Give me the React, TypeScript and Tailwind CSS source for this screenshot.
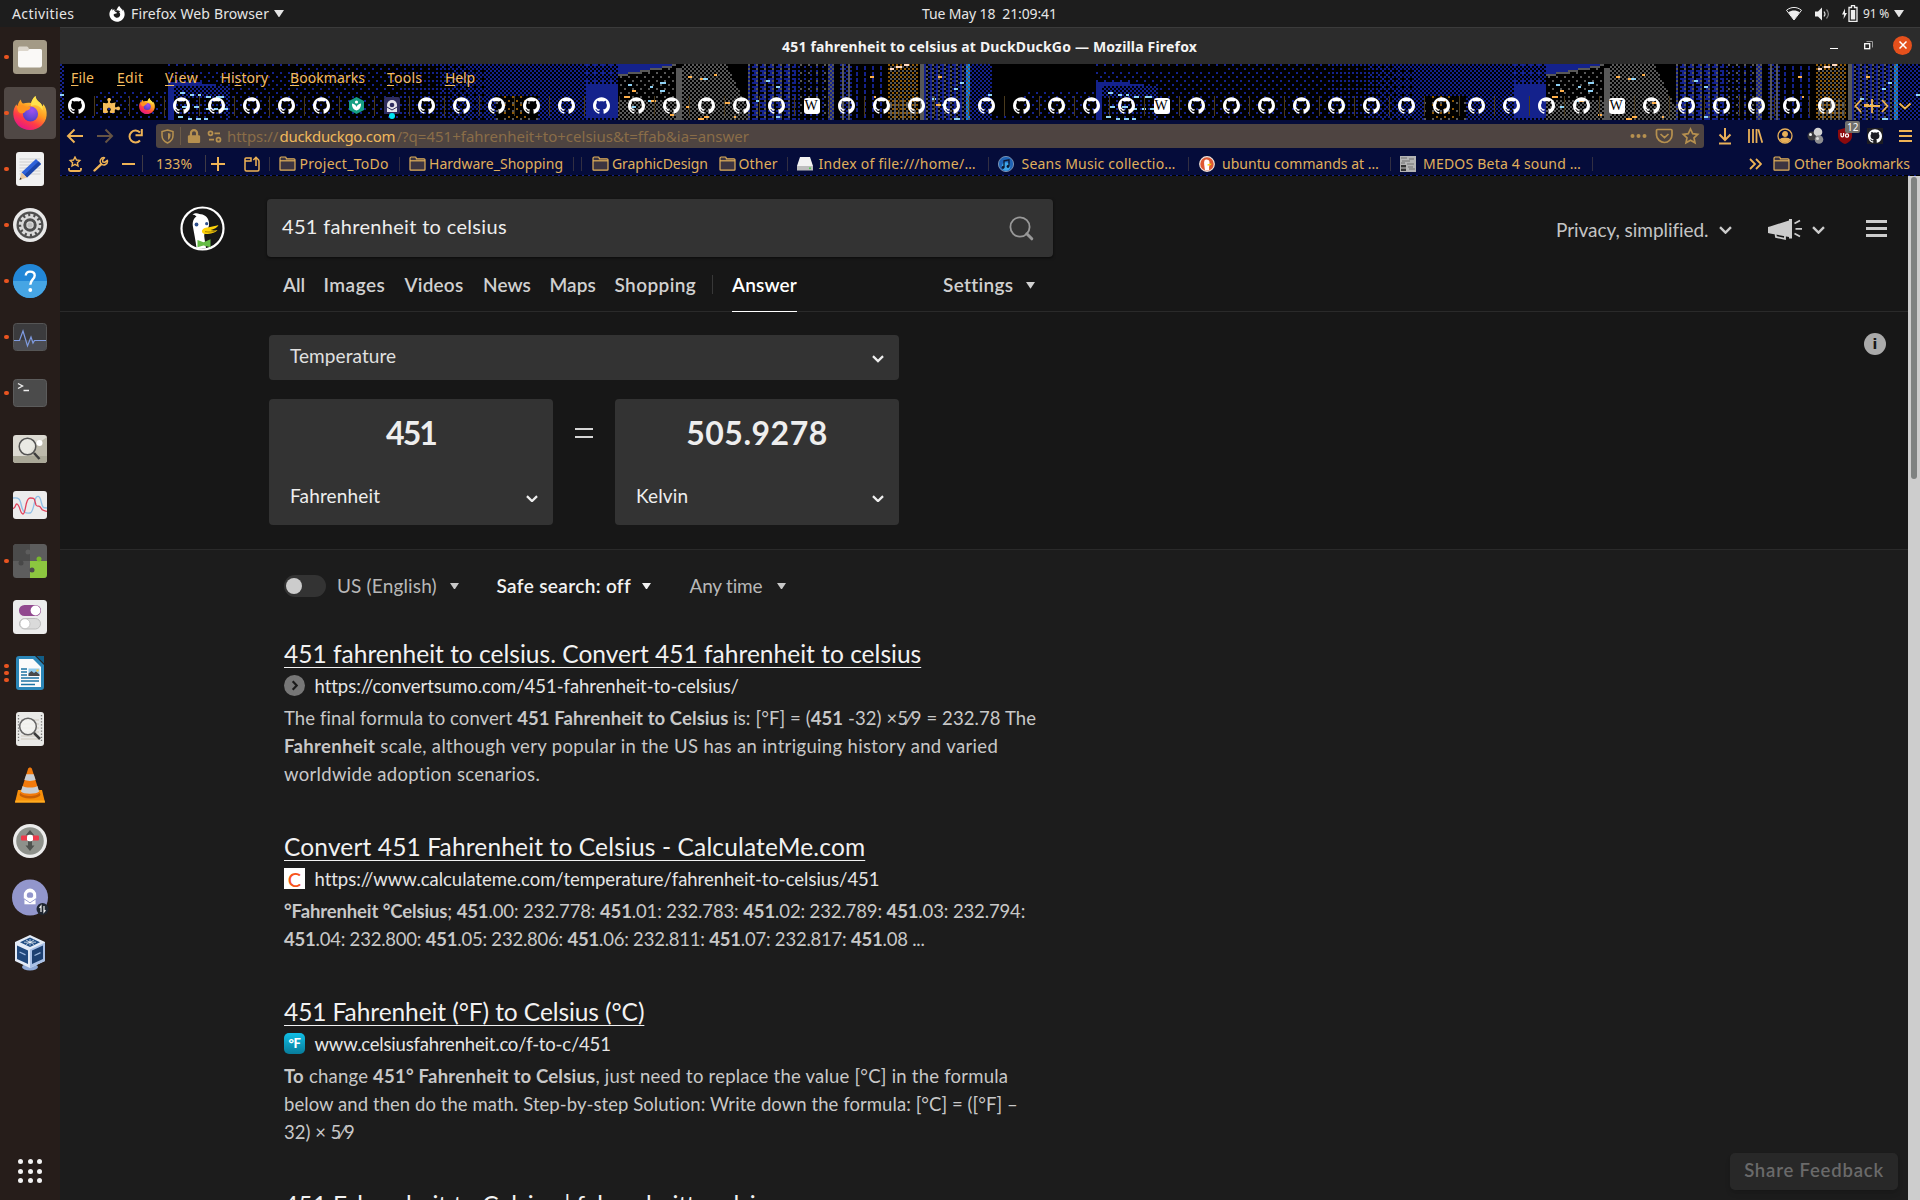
import type { ReactNode } from "react";
import { FaFirefoxBrowser, FaPuzzlePiece, FaLock, FaWrench } from "react-icons/fa";
import { SiGithub } from "react-icons/si";

/* ---------- pixel-art skyline behind the tab strip ---------- */

const BAYER = [
  [0, 8, 2, 10],
  [12, 4, 14, 6],
  [3, 11, 1, 9],
  [15, 7, 13, 5],
];

const PALETTE = {
  blue: "#14228c",
  gray: "#585858",
  brown: "#8f5a08",
  azure: "#0a84f0",
  sky: "#8fd2f5",
  amber: "#ffb04a",
  peach: "#ffd9c0",
};
type Ink = keyof typeof PALETTE;

function skyDensity(x: number, y: number) {
  if (x < 96) return y > 48 ? 0.12 : 0;
  if (x < 165) return y > 26 ? 0.1 : 0;
  if (x < 300) return y > 6 ? 0.1 : 0.06;
  if (x < 400) return 0.13;
  if (x < 440) return 0.2;
  if (x < 490) return 0.3 + (x - 440) / 250;
  if (x < 585) return 0.5;
  return y > 18 ? 0.97 - (y > 50 ? 0.2 : 0) : 0.56;
}

function inkAt(x: number, y: number): Ink | null {
  const cx = x >> 1;
  const cy = y >> 1;
  const t = (BAYER[cy % 4][cx % 4] + 0.5) / 16;
  const checker = (cx + cy) % 2 === 0;
  if (x >= 168 && x < 229 && y >= 18 + (x > 200 ? (x - 200) / 7 : 0)) {
    if (x < 174 || y < 22) return "blue";
    return y < 32 || x > 224 ? (checker ? "blue" : null) : t < 0.2 ? "blue" : null;
  }
  if (x >= 496 && x < 538 && y >= 32) {
    if (x > 500 && x < 526 && t < 0.15) return "brown";
    return t > 0.94 ? "gray" : null;
  }
  if (x < 618) return t < skyDensity(x, y) ? "blue" : null;
  if (x < 676) {
    const roof = 10 - (x - 622) / 5.5;
    if (y < roof - 1) return "blue";
    if (y < roof + 1) return "gray";
    if (y > 34) return t < 0.5 ? "gray" : null;
    return t < 0.14 ? "gray" : null;
  }
  if (x < 681) return y > 3 ? "gray" : null;
  if (x < 748) return x < 726 + y * 0.5 ? (checker ? "gray" : null) : null;
  if (x < 795) {
    const k = cx % 4;
    if (k === 0) return cy % 2 ? "blue" : null;
    if (k === 2) return checker ? "gray" : "blue";
    return k === 1 && t < 0.6 ? "blue" : null;
  }
  if (x < 828) return cx % 3 === 0 && cy % 2 ? (t < 0.2 ? "gray" : "blue") : t < 0.06 ? "gray" : null;
  if (x < 834) return checker ? "gray" : "blue";
  if (x < 840) return null;
  if (x < 851) return cx % 3 === 1 ? "gray" : checker ? "blue" : null;
  if (x < 888) return cx % 4 === 0 && cy % 3 !== 0 ? "blue" : null;
  if (x < 918) return checker ? (t < 0.28 ? "brown" : "gray") : y > 34 && t < 0.7 ? "gray" : null;
  if (x < 920) return null;
  if (x < 924) return "gray";
  if (x < 966) {
    const k = cx % 3;
    return k === 0 ? "blue" : k === 1 ? (checker ? "gray" : null) : checker ? "blue" : null;
  }
  if (x < 970) return checker ? "azure" : "gray";
  return checker ? "blue" : null;
}

const SPARKS: [Ink, number, number, number][] = [
  ["sky", 180, 28, 5], ["sky", 190, 30, 4], ["sky", 198, 30, 3], ["sky", 206, 32, 5], ["sky", 216, 32, 8],
  ["sky", 182, 42, 5], ["sky", 194, 42, 6], ["sky", 206, 44, 3], ["sky", 214, 44, 4], ["sky", 222, 44, 6],
  ["sky", 178, 52, 5], ["sky", 188, 54, 4], ["sky", 196, 54, 5], ["sky", 204, 54, 4],
  ["sky", 628, 20, 4], ["sky", 660, 18, 6], ["sky", 650, 22, 3], ["amber", 632, 26, 4], ["sky", 660, 26, 5],
  ["amber", 624, 32, 6], ["sky", 648, 36, 3], ["amber", 651, 36, 5], ["sky", 632, 42, 4], ["amber", 670, 50, 4],
  ["amber", 688, 12, 4], ["amber", 700, 14, 3], ["sky", 703, 14, 5], ["amber", 714, 10, 3], ["amber", 724, 38, 6],
  ["amber", 686, 42, 4], ["amber", 704, 52, 5], ["amber", 698, 54, 6], ["amber", 734, 52, 2],
  ["sky", 766, 16, 4], ["sky", 776, 22, 4], ["sky", 756, 36, 4], ["sky", 776, 52, 4],
  ["amber", 870, 12, 4], ["amber", 874, 32, 2], ["peach", 890, 4, 4], ["peach", 896, 2, 6], ["peach", 904, 0, 5],
  ["amber", 938, 12, 4], ["sky", 932, 34, 4], ["sky", 960, 18, 4], ["sky", 954, 24, 4], ["amber", 936, 40, 5],
  ["sky", 942, 40, 3], ["sky", 954, 54, 6], ["sky", 988, 30, 4],
];

const SKYLINE: Record<Ink, string> = (() => {
  const out = { blue: "", gray: "", brown: "", azure: "", sky: "", amber: "", peach: "" };
  for (let y = 0; y < 56; y += 2)
    for (let x = 64; x < 992; x += 2) {
      const ink = inkAt(x, y);
      if (ink) out[ink] += `M${x} ${y}h2v2h-2z`;
    }
  for (const [ink, x, y, w] of SPARKS) out[ink] += `M${x} ${y}h${w}v2h-${w}z`;
  return out;
})();

function Skyline() {
  return (
    <svg className="absolute inset-0 h-[56px] w-[1860px]" viewBox="60 0 1860 56" shapeRendering="crispEdges">
      <defs>
        <g id="city">
          {(Object.keys(PALETTE) as Ink[]).map((k) => (
            <path key={k} d={SKYLINE[k]} fill={PALETTE[k]} />
          ))}
        </g>
      </defs>
      <use href="#city" x="-928" />
      <use href="#city" />
      <use href="#city" x="928" />
    </svg>
  );
}

/* ---------- shared icons ---------- */

function Firefox({ size }: { size: number }) {
  return (
    <svg width={size} height={size} viewBox="0 0 34 34">
      <defs>
        <linearGradient id="ffBody" x1="0.8" y1="0.1" x2="0.3" y2="1">
          <stop offset="0" stopColor="#ffe14a" />
          <stop offset="0.4" stopColor="#ff9a1f" />
          <stop offset="0.7" stopColor="#ff3b47" />
          <stop offset="1" stopColor="#e3158a" />
        </linearGradient>
        <radialGradient id="ffGlobe" cx="0.6" cy="0.25" r="0.8">
          <stop offset="0" stopColor="#a050f0" />
          <stop offset="0.6" stopColor="#6a48d8" />
          <stop offset="1" stopColor="#4a3cc0" />
        </radialGradient>
      </defs>
      <path
        d="M22.500 0c.2 3 1.800 4.600 4.500 6.800 1.200 1 1.800 2.300 2.300 3.400.8-.6 1-1.400 1-2.200 2.700 3 3.700 7 3.300 11.500C32.800 27.500 26 34 17 34 8 34 .8 27.500.3 18.500.1 14.500 1.200 11 3.500 8.200c.2 1 .5 1.500 1 2C5 7.500 6.200 5 8 3.500c0 1.800.6 3 2 4C13 6.500 16 6.400 18 7c1-3 2.500-5.500 4.500-7z"
        fill="url(#ffBody)"
      />
      <circle cx="17.500" cy="18" r="7.600" fill="url(#ffGlobe)" />
      <path d="M4 10c3.500-1.500 6.500-1.200 9 .8 1.500 0 4-.2 4.500.6-.2 1.600-1.800 2.600-4.500 3.300-1 2-3.500 3-5.500 2.500C5 16.500 4 13 4 10z" fill="#ff9320" />
      <path d="M22.500 0c.2 3 1.800 4.600 4.500 6.800 2.500 2.400 3 5 2.500 7.500-1.500-3.300-5-5-7.500-5-1.500 0-3 .2-4 .6C18 6 19.500 2.500 22.500 0z" fill="#ffe24d" />
    </svg>
  );
}

function Folder() {
  return (
    <svg className="h-[15px] w-[17px] shrink-0" viewBox="0 0 17 15" fill="none" stroke="#e3b15a" strokeWidth="1.200">
      <path d="M1 13.500V2.300C1 1.500 1.400 1 2.200 1h4c.6 0 .9.300 1 .9l.2.9h7.600c.6 0 1 .4 1 1v9.700c0 .4-.3.600-.7.600H1.700c-.4 0-.7-.200-.7-.600z" fill="#4a3f42" fillOpacity="0.800" />
      <path d="M1 4.800h15" />
    </svg>
  );
}

function Chevron({ w = 13, color = "#fff", sw = 2 }: { w?: number; color?: string; sw?: number }) {
  return (
    <svg className="shrink-0" width={w} height={w * 0.65} viewBox="0 0 13 8.500" fill="none" stroke={color} strokeWidth={sw}>
      <path d="M1 1.200l5.500 5.500L12 1.200" />
    </svg>
  );
}

function Caret({ w, color }: { w: number; color: string }) {
  return (
    <svg className="shrink-0" width={w} height={w * 0.75} viewBox="0 0 10 7.500">
      <path d="M0 0h10L5 7.500z" fill={color} />
    </svg>
  );
}

/* ---------- top bar ---------- */

function TopBar() {
  return (
    <div className="flex h-[27px] items-center bg-[#1d1d1d] text-[14px] leading-[26px] whitespace-nowrap text-[#e6e6e6]">
      <span className="ml-[12px] w-[97px] tracking-[0.4px]">Activities</span>
      <FaFirefoxBrowser className="size-[16px] text-white" />
      <span className="ml-[6px] w-[138px] tracking-[0.14px]">Firefox Web Browser</span>
      <span className="ml-[5px]"><Caret w={10} color="#e6e6e6" /></span>
      <span className="ml-[638px] w-[136px] tracking-[-0.13px] whitespace-pre">Tue May 18  21:09:41</span>
      <svg className="ml-[728px] h-[14px] w-[16px]" viewBox="0 0 16 14">
        <path d="M0.500 3.300C5 -.5 11 -.5 15.500 3.300L8 13z" fill="none" stroke="#eee" strokeWidth="1" />
        <path d="M2.300 5.200C6 2.800 10 2.800 13.700 5.200L8 13z" fill="#eee" />
      </svg>
      <svg className="ml-[13px] h-[14px] w-[15px]" viewBox="0 0 15 14" fill="none" stroke="#8a8a8a" strokeWidth="1.200">
        <path d="M0 4.500h3L7 .5v13l-4-4H0z" fill="#eee" stroke="none" />
        <path d="M9 4.500c1.200 1.500 1.200 3.500 0 5" stroke="#ddd" />
        <path d="M11.500 2.500c2.300 2.700 2.300 6.300 0 9" />
      </svg>
      <svg className="ml-[12px] h-[17px] w-[16px]" viewBox="0 0 16 17">
        <path d="M3 3.500L0 9.500h2L1.500 14 5 8H3z" fill="#eee" />
        <path d="M7 2.500h2.500V.7h3v1.800H15v13.800H7z" fill="none" stroke="#eee" strokeWidth="1.300" />
        <path d="M8.800 5h4.400v9.500H8.800z" fill="#eee" />
      </svg>
      <span className="ml-[5px] w-[28px] text-[12px] tracking-[-0.2px]">91 %</span>
      <span className="ml-[3px]"><Caret w={10} color="#e6e6e6" /></span>
    </div>
  );
}

/* ---------- dock ---------- */

const DOCK: { dots: number; active?: boolean; icon: ReactNode }[] = [
  {
    dots: 1,
    icon: (
      <svg width="34" height="34" viewBox="0 0 34 34">
        <rect width="34" height="34" rx="3.500" fill="#a39a86" />
        <path d="M5 8.500C5 7 6 6.500 7 6.500h6.500c1 0 1.500.5 2 1.500l.5 1h11c1.300 0 2 .7 2 2v6H5z" fill="#dcd6cb" />
        <path d="M5 12.500c0-1 .5-1.500 1.500-1.500h8c1 0 1.500-2 2.500-2h10c1.300 0 2 .7 2 2v14c0 1.500-.7 2.500-2 2.500H7c-1.300 0-2-1-2-2.500z" fill="#faf9f7" />
      </svg>
    ),
  },
  { dots: 1, active: true, icon: <Firefox size={34} /> },
  {
    dots: 1,
    icon: (
      <svg width="28" height="34" viewBox="0 0 28 34">
        <rect width="28" height="34" rx="3" fill="#f1f1f1" />
        <path d="M3.500 7h21M3.500 10h21M3.500 13h21M3.500 16h21M3.500 19h21M3.500 22h21" stroke="#cfcfcf" strokeWidth="1" />
        <path d="M20 7l5 5L11 25.500l-5.500-5z" fill="#2f62d9" />
        <path d="M22.500 9.500l2.500 2.500L11 25.500 8.300 23z" fill="#1c45a8" />
        <path d="M5.500 20.500l5.500 5-7.500 2.500z" fill="#e8c79d" />
        <path d="M4.300 25.500l1.500 1.600-2.300.9z" fill="#333" />
      </svg>
    ),
  },
  {
    dots: 1,
    icon: (
      <svg width="34" height="34" viewBox="0 0 34 34">
        <circle cx="17" cy="17" r="17" fill="#e8e8e8" />
        <circle cx="17" cy="17" r="13.500" fill="#4e4e4e" />
        <circle cx="17" cy="17" r="9.500" fill="none" stroke="#d9d9d9" strokeWidth="3.500" strokeDasharray="3 1.970" />
        <circle cx="17" cy="17" r="7.800" fill="none" stroke="#d9d9d9" strokeWidth="2.200" />
        <circle cx="17" cy="17" r="4.500" fill="#d9d9d9" stroke="#4e4e4e" strokeWidth="1.500" />
        <circle cx="17" cy="17" r="2.500" fill="#bdbdbd" />
      </svg>
    ),
  },
  {
    dots: 1,
    icon: (
      <svg width="34" height="34" viewBox="0 0 34 34">
        <circle cx="17" cy="17" r="17" fill="#2287d8" />
        <path d="M0 17h34a17 17 0 0 1-34 0z" fill="#46a5e4" />
        <path d="M12.800 11.500c0-2.600 1.700-3.900 4.200-3.900 3 0 4.700 1.400 4.700 3.900 0 4-4.400 4-4.400 9.300" fill="none" stroke="#fff" strokeWidth="2.400" />
        <circle cx="17.300" cy="26" r="1.900" fill="#fff" />
      </svg>
    ),
  },
  {
    dots: 1,
    icon: (
      <svg width="34" height="28" viewBox="0 0 34 28">
        <rect x=".5" y=".5" width="33" height="27" rx="3" fill="#3b3b3d" stroke="#555" />
        <path d="M1 17h32v8a2 2 0 0 1-2 2H3a2 2 0 0 1-2-2z" fill="#4b4c52" />
        <path d="M1 17.500h5.500L10 8l4.500 15 3.500-9 2 6 1.500-2.500H33" fill="none" stroke="#7f9be0" strokeWidth="1.200" />
      </svg>
    ),
  },
  {
    dots: 1,
    icon: (
      <svg width="34" height="28" viewBox="0 0 34 28">
        <rect x=".5" y=".5" width="33" height="27" rx="3" fill="#4b4b4b" stroke="#5c5c5c" />
        <path d="M5 4.500l4.500 2.500L5 9.500M10.500 11.500H16" fill="none" stroke="#eee" strokeWidth="1.400" />
      </svg>
    ),
  },
  {
    dots: 0,
    icon: (
      <svg width="34" height="28" viewBox="0 0 34 28">
        <rect width="34" height="28" rx="3" fill="#dcdad2" />
        <path d="M0 21h34v4a3 3 0 0 1-3 3H3a3 3 0 0 1-3-3z" fill="#aaa898" />
        <path d="M20 12L34 2v19H14z" fill="#bcb9ab" />
        <circle cx="26.500" cy="8" r="3" fill="#fff" />
        <circle cx="14.500" cy="11.500" r="8.300" fill="#eeede8" fillOpacity="0.800" stroke="#555" strokeWidth="1.500" />
        <path d="M21 18l5.500 6" stroke="#3c3c3c" strokeWidth="2.500" />
      </svg>
    ),
  },
  {
    dots: 0,
    icon: (
      <svg width="34" height="28" viewBox="0 0 34 28">
        <rect width="34" height="28" rx="3" fill="#ececec" />
        <path d="M0 7c6-1 7 1 8.500 8S13 22.500 17 22s4-14 6.500-16 4 1 5 6 2 5 5.500 5" fill="none" stroke="#8fbfe6" strokeWidth="1.300" />
        <path d="M0 17.500c3 0 2-5 4-4.500 3 1 3 10 6 10s2-16 7-16 4 0 6 7c2 3 3-1 5 3 1 3 3 2 6 3.500" fill="none" stroke="#e0435c" strokeWidth="1.300" />
      </svg>
    ),
  },
  {
    dots: 1,
    icon: (
      <svg width="34" height="34" viewBox="0 0 34 34">
        <rect width="34" height="34" rx="3.500" fill="#5d5d5d" />
        <path d="M3.500 0H17v17H0V3.500A3.500 3.500 0 0 1 3.500 0z" fill="#4b4b4b" />
        <path d="M17 17h17v13.500a3.500 3.500 0 0 1-3.500 3.500H17z" fill="#8cc63f" />
        <circle cx="15" cy="8" r="2.500" fill="#5d5d5d" />
        <circle cx="8" cy="19" r="2.500" fill="#484848" />
        <circle cx="26" cy="15" r="2.500" fill="#79b82d" />
        <circle cx="19" cy="26" r="2.500" fill="#4c4c4c" />
      </svg>
    ),
  },
  {
    dots: 0,
    icon: (
      <svg width="34" height="34" viewBox="0 0 34 34">
        <rect width="34" height="34" rx="3.500" fill="#ececec" />
        <rect x="6" y="5" width="22" height="11" rx="5.500" fill="#91488f" />
        <circle cx="22.500" cy="10.500" r="4.900" fill="#fff" />
        <rect x="6.500" y="18.500" width="21" height="10.500" rx="5.200" fill="#dadada" stroke="#bdbdbd" />
        <circle cx="12" cy="23.700" r="5" fill="#fff" stroke="#bbb" strokeWidth=".8" />
      </svg>
    ),
  },
  {
    dots: 3,
    icon: (
      <svg width="28" height="34" viewBox="0 0 28 34">
        <path d="M3 0h16l9 9v22a3 3 0 0 1-3 3H3a3 3 0 0 1-3-3V3a3 3 0 0 1 3-3z" fill="#2b86b8" />
        <path d="M20.500 0H28v7.500z" fill="#125d86" />
        <path d="M3 3h14l8 8v20H3z" fill="#fbfbfb" />
        <path d="M5 13h6M5 16h6M5 19h6M5 22h18M5 25h18M5 28.500h14" stroke="#1e74a4" strokeWidth="1.300" />
        <rect x="12.500" y="12.500" width="11" height="7.500" fill="#8fcbee" />
        <path d="M12.500 20v-2.500l3-2.500 2.500 2 2-1.500 3.500 3V20z" fill="#4a4a4a" />
        <circle cx="21.500" cy="14.500" r="1.200" fill="#f7c948" />
      </svg>
    ),
  },
  {
    dots: 0,
    icon: (
      <svg width="28" height="34" viewBox="0 0 28 34">
        <rect width="28" height="34" rx="3" fill="#e9e9e7" />
        <path d="M2.500 3v28M25.500 3v28" stroke="#777" strokeWidth="1.300" strokeDasharray="1.300 1.800" />
        <path d="M5 8h18M5 12h18M5 16h18M5 20h18M5 24h18M5 27h18" stroke="#cfc9bd" />
        <circle cx="12" cy="14.500" r="8.300" fill="#f4f4f2" fillOpacity="0.850" stroke="#666" strokeWidth="1.500" />
        <path d="M18 21l6 6" stroke="#3c3c3c" strokeWidth="2.500" />
      </svg>
    ),
  },
  {
    dots: 0,
    icon: (
      <svg width="32" height="36" viewBox="0 0 32 36">
        <path d="M4 23h24l3 12.500H1z" fill="#f78f0a" />
        <path d="M1.400 33.500h29.200l.4 2H1z" fill="#ffab1f" />
        <ellipse cx="16" cy="27.500" rx="10.500" ry="4" fill="#c75f06" />
        <path d="M14 2c.5-2 3.500-2 4 0l7.500 24c-2 4-17 4-19 0z" fill="#f27a0c" />
        <path d="M12.300 7.200h7.400l1.900 5.600c-2 1.500-9.200 1.500-11.200 0z" fill="#c9ced4" />
        <path d="M8.600 19c3 2 11.800 2 14.800 0l1.700 5.500c-2.500 3-15.700 3-18.200 0z" fill="#c9ced4" />
      </svg>
    ),
  },
  {
    dots: 0,
    icon: (
      <svg width="34" height="34" viewBox="0 0 34 34">
        <circle cx="17" cy="17" r="17" fill="#ececec" />
        <circle cx="17" cy="17" r="13.800" fill="#8e918b" />
        <path d="M17 6l4.500 5.500H19v10h2.500L17 27l-4.500-5.500H15v-10h-2.500z" fill="#4f524e" />
        <rect x="8" y="11.500" width="18" height="5" rx="1" fill="#ed3b4b" />
        <rect x="14" y="10.800" width="6" height="6.400" rx="2" fill="#fff" />
      </svg>
    ),
  },
  {
    dots: 0,
    icon: (
      <svg width="37" height="37" viewBox="0 0 37 37">
        <circle cx="18" cy="18.500" r="18" fill="#9296cc" />
        <path d="M11.800 16a6.200 6.500 0 0 1 12.400 0v3.500l-2.700 2v4h-7v-4l-2.700-2z" fill="#fff" />
        <path d="M14.800 16.500a3.200 3.300 0 0 1 6.400 0c0 1-.5 1.700-1.200 2.200h-4c-.7-.5-1.200-1.200-1.200-2.200z" fill="#9296cc" />
        <path d="M12 19.800l6 4 6-4v6H12z" fill="#fff" stroke="#9296cc" strokeWidth=".9" />
        <circle cx="30.500" cy="30" r="6" fill="#1f2631" />
        <path d="M29 33v-6l-1.500 1.800M32 27v6l1.500-1.800" fill="none" stroke="#eee" strokeWidth="1.200" />
      </svg>
    ),
  },
  {
    dots: 0,
    icon: (
      <svg width="32" height="36" viewBox="0 0 32 36">
        <ellipse cx="16" cy="32" rx="8" ry="3.500" fill="#8fa9d6" />
        <path d="M16 0l15 7v19l-15 7L1 26V7z" fill="#e3ebf7" />
        <path d="M16 2.500l10 4.700-10 4.800L6 7.200z" fill="#1f4d84" />
        <path d="M10 7.200h12M16 4v6.500M12 5l8 4.500M20 5l-8 4.500" stroke="#fff" strokeWidth=".7" />
        <path d="M3 10.500l11 5v13.500l-11-5z" fill="#20487c" />
        <path d="M16 14.500l15-7V26l-15 7z" fill="#a9c0e6" />
        <path d="M18 15.500l11-5V24l-11 5z" fill="#1c3f70" />
        <path d="M5.500 17l6 2.800M20.500 20.500l6-2.800" stroke="#9db8de" strokeWidth="1.300" />
      </svg>
    ),
  },
];

function Dock() {
  return (
    <div className="flex w-[60px] shrink-0 flex-col bg-[#261d1a] pt-[2px]">
      {DOCK.map((d, i) => (
        <div key={i} className="relative flex h-[56px] items-center justify-center">
          <div className={d.active ? "flex size-[52px] items-center justify-center rounded-[4px] bg-[#504845]" : ""}>{d.icon}</div>
          <div className="absolute top-0 left-[4px] flex h-[56px] flex-col justify-center gap-[2.500px]">
            {Array.from({ length: d.dots }, (_, k) => (
              <i key={k} className="size-[4.600px] rounded-full bg-[#e95420]" />
            ))}
          </div>
        </div>
      ))}
      <div className="mt-auto mb-[17px] grid grid-cols-3 gap-[4.500px] self-center">
        {Array.from({ length: 9 }, (_, k) => (
          <i key={k} className="size-[5px] rounded-full bg-[#f2f2f2]" />
        ))}
      </div>
    </div>
  );
}

/* ---------- browser chrome ---------- */

function TitleBar() {
  return (
    <div className="flex h-[37px] items-center border-t border-[#3b3b3b] bg-[#2c2c2c]">
      <span className="ml-[722px] w-[417px] text-[14px] font-bold tracking-[0.18px] whitespace-nowrap text-[#f4f4f4]">
        451 fahrenheit to celsius at DuckDuckGo — Mozilla Firefox
      </span>
      <i className="mt-[5px] ml-[631px] h-[1.500px] w-[8px] bg-white" />
      <svg className="mb-px ml-[26px] h-[9px] w-[9px]" viewBox="0 0 9 9" fill="none">
        <path d="M2.500.5h6v6" stroke="#999" />
        <rect x=".7" y="2.700" width="5" height="5" stroke="#fff" strokeWidth="1.300" />
      </svg>
      <span className="mb-[2px] ml-[20px] flex size-[19px] items-center justify-center rounded-full bg-[#e5501c]">
        <svg className="size-[8px]" viewBox="0 0 8 8" stroke="#fff" strokeWidth="1.500"><path d="M.5.5l7 7M7.500.5l-7 7" /></svg>
      </span>
    </div>
  );
}

const MENU: [string, string, string][] = [
  ["F", "ile", "w-[46px] tracking-[0.2px]"],
  ["E", "dit", "w-[48px] tracking-[0.3px]"],
  ["V", "iew", "w-[55.500px] tracking-[0.700px]"],
  ["", "Hi", "w-[69.500px] tracking-[0.060px]"],
  ["B", "ookmarks", "w-[97px] tracking-[0.070px]"],
  ["T", "ools", "w-[58px] tracking-[0.230px]"],
  ["H", "elp", "w-[40px] tracking-[-0.160px]"],
];

function TabIcon({ i }: { i: number }) {
  if (i === 1) return <FaPuzzlePiece className="size-[17px] text-[#f6bd5c]" />;
  if (i === 2) return <Firefox size={16} />;
  if (i === 8)
    return (
      <svg className="h-[17px] w-[15px]" viewBox="0 0 15 17">
        <path d="M7.500 0L15 4v9l-7.500 4L0 13V4z" fill="#16a085" />
        <path d="M7.500 13.500C4 12.500 2.800 9.500 3 6.500c2.300.3 4 1.600 4.500 3.600C8 8.100 9.700 6.800 12 6.500c.2 3-1 6-4.500 7z" fill="#fff" />
        <circle cx="7.500" cy="5" r="1.600" fill="#fff" />
      </svg>
    );
  if (i === 9)
    return (
      <span className="relative flex h-[17px] w-[16px] items-center justify-center rounded-[2px] bg-[#2f2d5e]">
        <svg className="h-[12px] w-[10px]" viewBox="0 0 10 12">
          <path d="M0 5a5 5 0 0 1 10 0v7H0z" fill="#e6e3ea" />
          <circle cx="5" cy="5" r="2.300" fill="#2f2d5e" />
          <path d="M0 7l5 3 5-3" fill="none" stroke="#2f2d5e" />
        </svg>
        <i className="absolute top-[16px] left-[5px] size-[6px] rounded-full bg-[#00e5f5]" />
      </span>
    );
  if (i === 21 || i === 31 || i === 44)
    return (
      <span className="flex size-[16px] items-center justify-center rounded-[3px] bg-white pr-px font-['Liberation_Serif'] text-[14px] leading-none text-black">
        W
      </span>
    );
  return <SiGithub className="size-[17px] text-white" />;
}

function TabStrip() {
  return (
    <div className="relative h-[56px] overflow-hidden bg-black">
      <Skyline />
      <div className="relative flex h-[27px] items-start pt-[3px] pl-[11px] text-[14px] leading-[22px] text-[#f5bd5e]">
        {MENU.map(([u, rest, cls]) => (
          <span key={rest} className={cls}>
            {u ? (
              <><u className="underline-offset-2">{u}</u>{rest}</>
            ) : (
              <>Hi<u className="underline-offset-2">s</u>tory</>
            )}
          </span>
        ))}
      </div>
      <div className="relative flex h-[29px] items-center">
        {Array.from({ length: 51 }, (_, i) => (
          <div key={i} className="relative flex h-[20px] w-[35px] shrink-0 items-center justify-center border-r border-[#4a3a1c] pr-px">
            <TabIcon i={i} />
          </div>
        ))}
        <svg className="ml-[7px] h-[16px] w-[65px]" viewBox="0 0 65 16" fill="none" stroke="#f2b552" strokeWidth="1.800">
          <path d="M9 2L3.500 8 9 14M12 8h16M20 1v14M30 2l5.500 6L30 14M47.500 5.500L53 10.500l5.500-5" />
        </svg>
      </div>
    </div>
  );
}

function NavBar() {
  return (
    <div className="flex h-[32px] items-center">
      <svg className="ml-[6px] h-[16px] w-[18px]" viewBox="0 0 18 16" fill="none" stroke="#efb355" strokeWidth="2">
        <path d="M17 8H2M8.500 1.500L2 8l6.500 6.500" />
      </svg>
      <svg className="ml-[12px] h-[16px] w-[18px]" viewBox="0 0 18 16" fill="none" stroke="#665444" strokeWidth="2">
        <path d="M1 8h15M9.500 1.500L16 8l-6.500 6.500" />
      </svg>
      <svg className="ml-[13px] h-[16px] w-[17px]" viewBox="0 0 17 16" fill="none" stroke="#efb355" strokeWidth="2">
        <path d="M13 12.500A6 6 0 1 1 13 4.500" />
        <path d="M14.800 1v6.300H8.500" />
      </svg>
      <div className="ml-[12px] flex h-[24px] w-[1548px] items-center rounded-[3px] bg-[#4e4441] whitespace-nowrap">
        <svg className="ml-[5px] h-[15px] w-[13px]" viewBox="0 0 13 15" fill="none" stroke="#b6904f" strokeWidth="1.500">
          <path d="M6.500 1L12 2.500v4c0 3.500-2 6-5.500 7.500C3 12.500 1 10 1 6.500v-4z" />
          <path d="M7 4v7c1.800-1.200 2.500-2.700 2.500-4.500V4.700z" fill="#b6904f" stroke="none" />
        </svg>
        <i className="ml-[6px] h-[18px] w-px bg-[#6d5b48]" />
        <FaLock className="ml-[6px] h-[14px] w-[14px] text-[#b6904f]" />
        <svg className="ml-[6px] h-[13px] w-[16px]" viewBox="0 0 16 13" fill="none" stroke="#b6904f" strokeWidth="1.700">
          <circle cx="3.500" cy="3.300" r="2" />
          <path d="M7.500 3.300H13M2 9.700h5" />
          <circle cx="11.500" cy="9.700" r="2" />
        </svg>
        <span className="ml-[4px] text-[15px] leading-[24px] text-[#8a6d48]">
          <span className="inline-block w-[52.500px] tracking-[-0.060px]">https://</span>
          <span className="inline-block w-[117px] tracking-[-0.310px] text-[#f0b95c]">duckduckgo.com</span>
          /?q=451+fahrenheit+to+celsius&amp;t=ffab&amp;ia=answer
        </span>
        <svg className="mr-[3px] ml-auto h-[18px] w-[72px]" viewBox="0 0 72 18" fill="none" stroke="#b6904f" strokeWidth="1.700">
          <g fill="#b6904f" stroke="none">
            <circle cx="3.500" cy="9" r="2" /><circle cx="9.500" cy="9" r="2" /><circle cx="15.500" cy="9" r="2" />
          </g>
          <path d="M28.500 2.500h13.500c.5 0 1 .5 1 1V8c0 4-3.500 7.500-7.500 7.500S27.500 12 27.500 8V3.500c0-.5.5-1 1-1zM31.500 7l4 3.700 4-3.700" />
          <path d="M61.500 2l2.200 4.700 5 .6-3.700 3.500 1 5-4.500-2.500-4.500 2.500 1-5-3.700-3.500 5-.6z" />
        </svg>
      </div>
      <svg className="ml-[14px] h-[17px] w-[14px]" viewBox="0 0 14 17" fill="none" stroke="#e9b058" strokeWidth="2">
        <path d="M7 0v11M1.500 6.500L7 12l5.500-5.500M1 15.500h12" />
      </svg>
      <svg className="ml-[15px] h-[15px] w-[16px]" viewBox="0 0 16 15" fill="none" stroke="#e9b058" strokeWidth="1.800">
        <path d="M2 0v14M6 0v14M9.500 0v14M11.300.3l4 13.500" />
      </svg>
      <svg className="ml-[14px] h-[16px] w-[16px]" viewBox="0 0 16 16" fill="none" stroke="#e9b058" strokeWidth="1.300">
        <circle cx="8" cy="8" r="7" /><circle cx="8" cy="6" r="2.300" fill="#e9b058" />
        <path d="M3.500 11.500c1-1.700 8-1.700 9 0-1.500 3-7.500 3-9 0z" fill="#e9b058" />
      </svg>
      <svg className="ml-[13px] h-[18px] w-[18px]" viewBox="0 0 18 18">
        <circle cx="6" cy="9" r="4.500" fill="#3a3a3e" /><circle cx="4.500" cy="7.500" r="1.500" fill="#eee" />
        <circle cx="12" cy="5" r="4.300" fill="#d2d2d2" /><circle cx="13" cy="12.500" r="4.300" fill="#8e8e90" /><circle cx="11.500" cy="11.500" r="1.500" fill="#ddd" />
      </svg>
      <span className="relative ml-[14px] flex">
        <svg className="h-[16px] w-[14px]" viewBox="0 0 14 16">
          <path d="M7 0l7 2v6c0 4-3 6.500-7 8-4-1.500-7-4-7-8V2z" fill="#8c0a0d" />
          <path d="M3 5v2.500a1.300 1.300 0 0 0 2.600 0V5" fill="none" stroke="#fff" strokeWidth="1.200" />
          <circle cx="9" cy="7.500" r="1.600" fill="none" stroke="#fff" strokeWidth="1.200" />
        </svg>
        <span className="absolute -top-[7px] left-[7px] rounded-[2px] bg-[#71706c] px-[2px] text-[10px] leading-[12px] text-white">12</span>
      </span>
      <span className="ml-[15px] flex size-[16px] items-center justify-center bg-[#1c1c22]"><SiGithub className="size-[14px] text-white" /></span>
      <svg className="ml-[16px] h-[14px] w-[13px]" viewBox="0 0 13 14" stroke="#efb355" strokeWidth="2">
        <path d="M0 2h13M0 7h13M0 12h13" />
      </svg>
    </div>
  );
}

const Sep = () => <i className="h-[14px] w-px shrink-0 bg-[#322f42]" />;

function BookmarkBar() {
  return (
    <div className="flex h-[23px] items-center text-[14px] leading-[22px] whitespace-nowrap text-[#e0b05c]">
      <svg className="ml-[7px] h-[16px] w-[16px]" viewBox="0 0 16 16" fill="none" stroke="#efb355" strokeWidth="1.400">
        <path d="M8 1l1.500 3 3.300.4-2.400 2.300.6 3.300-3-1.600L5 10l.6-3.300L3.200 4.400 6.500 4z" />
        <path d="M2 12v1.500c0 .8.400 1.500 1.500 1.500h9c1.100 0 1.500-.7 1.500-1.500V12" strokeWidth="1.800" />
      </svg>
      <svg className="ml-[10px] size-[16px]" viewBox="0 0 16 16" fill="none" stroke="#efb355" strokeWidth="1.800" strokeLinejoin="round" strokeLinecap="round">
        <path d="M1.500 14.500L8 8.300" strokeWidth="2.400" />
        <path d="M11.500 1.700A3.600 3.600 0 0 0 8 7.500a3.600 3.600 0 0 0 6.300-3.200L12 6.200 9.800 5.900 9.600 3.700z" strokeWidth="1.500" />
      </svg>
      <i className="ml-[13px] h-[2px] w-[13px] bg-[#efb355]" />
      <i className="ml-[7px] h-[17px] w-px bg-[#3f3a44]" />
      <span className="ml-[13px] w-[37px] tracking-[0.140px]">133%</span>
      <i className="ml-[12px] h-[17px] w-px bg-[#3f3a44]" />
      <svg className="ml-[5px] size-[14px]" viewBox="0 0 14 14" stroke="#efb355" strokeWidth="2"><path d="M0 7h14M7 0v14" /></svg>
      <svg className="ml-[19px] h-[16px] w-[17px]" viewBox="0 0 17 16" fill="none" stroke="#efb355" strokeWidth="1.700">
        <path d="M1 4v9.500c0 .8.500 1.500 1.500 1.500h11c1 0 1.500-.7 1.500-1.500V5c0-.8-.5-1.300-1.300-1.300M1 5V3c0-.6.4-1 1-1h5v3H1M12 10V1.500M9.300 4L12 1.300 14.700 4" strokeWidth="1.500" />
      </svg>
      <span className="ml-[8px]" /><Sep />
      <span className="ml-[9px]"><Folder /></span>
      <span className="ml-[3.500px] w-[99px] tracking-[0.280px]">Project_ToDo</span>
      <Sep />
      <span className="ml-[9px]"><Folder /></span>
      <span className="ml-[3.500px] w-[143.500px] tracking-[0.020px]">Hardware_Shopping</span>
      <Sep /><span className="ml-[7px]" /><Sep />
      <span className="ml-[10px]"><Folder /></span>
      <span className="ml-[3.500px] w-[106.500px] tracking-[-0.070px]">GraphicDesign</span>
      <Folder />
      <span className="ml-[3px] w-[48px] tracking-[0.170px]">Other</span>
      <Sep />
      <svg className="ml-[9px] h-[14px] w-[16px]" viewBox="0 0 16 14">
        <path d="M3 0h10l3 9H0z" fill="#f2f2f2" /><path d="M0 9h16v4.500H0z" fill="#bdbdbd" /><circle cx="13" cy="11.300" r="1" fill="#4c4" />
      </svg>
      <span className="ml-[6px] w-[169px] tracking-[0.260px]">Index of file:///home/…</span>
      <Sep />
      <svg className="ml-[9px] size-[16px]" viewBox="0 0 16 16">
        <circle cx="8" cy="8" r="7.600" fill="#1f63b5" stroke="#8fa6c0" strokeWidth=".8" /><circle cx="8" cy="10.500" r="4.300" fill="#3fa8ea" />
        <path d="M6 11.500V4.800l5-1v6.500" fill="none" stroke="#0c1730" strokeWidth="1.300" /><circle cx="5" cy="11.500" r="1.400" fill="#0c1730" /><circle cx="10" cy="10.500" r="1.400" fill="#0c1730" />
      </svg>
      <span className="ml-[8px] w-[166.500px] tracking-[0.200px]">Seans Music collectio…</span>
      <Sep />
      <svg className="ml-[10px] size-[16px]" viewBox="0 0 16 16">
        <circle cx="8" cy="8" r="7.300" fill="#de5833" stroke="#f0e4dc" strokeWidth="1.200" />
        <path d="M6 14.500C5.500 10 4.500 6.500 5.500 4.500c1-1.700 4.500-1.500 5 1.200.4 2.500-.8 5-.3 8.500z" fill="#fff" /><path d="M8.500 8.300l4-.7-.5 1.500-3.300.7z" fill="#fdd20a" />
      </svg>
      <span className="ml-[7px] w-[168px] tracking-[0.030px]">ubuntu commands at …</span>
      <Sep />
      <svg className="ml-[9px] size-[16px]" viewBox="0 0 16 16">
        <path d="M0 0h16v16H0z" fill="#b4b4b4" /><path d="M1 2h6M9 3h5M2 5h8M1 7h4M7 8h7M8 11h5M9 13h6" stroke="#707070" strokeWidth="1" /><path d="M1 9h5v6H1z" fill="#333" /><path d="M1 12h5" stroke="#ccc" />
      </svg>
      <span className="ml-[7px] w-[169px] tracking-[0.210px]">MEDOS Beta 4 sound …</span>
      <Sep />
      <svg className="ml-[156px] h-[12px] w-[13px]" viewBox="0 0 13 12" fill="none" stroke="#efb355" strokeWidth="1.800"><path d="M1 1l5 5-5 5M7 1l5 5-5 5" /></svg>
      <span className="ml-[11px]"><Folder /></span>
      <span className="ml-[4px] tracking-[-0.030px]">Other Bookmarks</span>
    </div>
  );
}

/* ---------- search page ---------- */

function DuckLogo() {
  return (
    <svg className="mt-[30px] ml-[120px] size-[45px] shrink-0" viewBox="0 0 45 45">
      <circle cx="22.500" cy="22.500" r="21" fill="none" stroke="#fff" strokeWidth="2.200" />
      <path d="M12.500 8.500c2-1.600 5-1.700 6.800-.6 4.700.2 8.500 2.800 9.500 7.500.7 3.300 0 6-1.800 8.200-2.500 2-3.300 5-2.500 9l1.500 9.500c-3 .9-7 .8-9.500 0-1-8-2.500-15-3.500-21-.9-4.800.3-8.600 3.500-10.600-1.200-1.200-2.600-1.900-4-2z" fill="#fff" />
      <circle cx="16.500" cy="18.500" r="1.900" fill="#2d4f8e" />
      <circle cx="26.700" cy="17.700" r="1.600" fill="#2d4f8e" />
      <path d="M22 24.500c1-2.500 4-3 7-3.300 3-.4 6-1.200 9.500-2.200-1 2.500-4.500 4.300-8 5 2 .7 4.500.6 7-.1-2 2.800-8 4.300-12 4.100-2.500-.2-4.100-1.500-3.500-3.500z" fill="#fdd20a" />
      <path d="M25 25.700c4 .6 7.500.3 10-.7" fill="none" stroke="#8a6a00" strokeWidth=".8" />
      <path d="M17.500 34l6 2.300 7-3v8l-7-1.800-6 1.800z" fill="#65bc46" />
    </svg>
  );
}

function Header() {
  return (
    <div className="flex h-[136px] items-start border-b border-[#2a2a2a] whitespace-nowrap">
      <DuckLogo />
      <div className="mt-[23px] ml-[42px] w-[786px]">
        <div className="flex h-[58px] items-center rounded-[4px] bg-[#333] pl-[15px] shadow-[0_1px_3px_rgba(0,0,0,0.6)]">
          <span className="mb-[5px] text-[20px] tracking-[0.320px] text-[#eee]">451 fahrenheit to celsius</span>
          <svg className="mr-[19px] ml-auto size-[25px]" viewBox="0 0 25 25" fill="none" stroke="#999">
            <circle cx="11" cy="11" r="9.600" strokeWidth="1.800" />
            <path d="M17.800 17.800l5 5" strokeWidth="3" strokeLinecap="round" />
          </svg>
        </div>
        <div className="flex h-[55px] items-start pl-[16px] text-[19px] leading-[28px] font-semibold text-[#d0d0d0]">
          <span className="mt-[14px] w-[40.500px]">All</span>
          <span className="mt-[14px] w-[81px] tracking-[0.500px]">Images</span>
          <span className="mt-[14px] w-[78.500px] tracking-[0.200px]">Videos</span>
          <span className="mt-[14px] w-[66.500px] tracking-[0.100px]">News</span>
          <span className="mt-[14px] w-[65px] tracking-[0.050px]">Maps</span>
          <span className="mt-[14px] w-[97.500px] tracking-[0.400px]">Shopping</span>
          <i className="mt-[18px] h-[19px] w-px bg-[#383838]" />
          <span className="ml-[19px] h-[55px] w-[65px] border-b border-white pt-[14px] tracking-[0.150px] text-white">Answer</span>
          <span className="mt-[14px] ml-[146px] w-[83px] tracking-[0.300px]">Settings</span>
          <span className="mt-[25px]"><Caret w={9} color="#d0d0d0" /></span>
        </div>
      </div>
      <div className="mt-[35px] mr-[21px] ml-auto flex h-[38px] items-center">
        <span className="w-[163px] text-[19px] tracking-[-0.050px] text-[#c4c4c4]">Privacy, simplified.</span>
        <Chevron color="#ccc" sw={2.400} />
        <svg className="ml-[36px] h-[22px] w-[34px]" viewBox="0 0 34 22" fill="#ccc">
          <path d="M0 8l2-.5L21 1.500V0h3v19.500h-3V18L2 14.500 0 14z" />
          <path d="M7.500 15l.5 3 9 2v-3" fill="none" stroke="#ccc" strokeWidth="1.800" />
          <path d="M26.500 4.500l5.500-3M27.500 9.800h6.500M26.500 14.500l5.500 3" stroke="#ccc" strokeWidth="1.800" />
        </svg>
        <span className="ml-[10px]"><Chevron color="#ccc" sw={2.400} /></span>
        <span className="mt-[-3px] ml-[41px] flex w-[21px] flex-col gap-[4px]">
          <i className="h-[3px] bg-[#ccc]" /><i className="h-[3px] bg-[#ccc]" /><i className="h-[3px] bg-[#ccc]" />
        </span>
      </div>
    </div>
  );
}

function UnitBox({ value, unit, valueClass }: { value: string; unit: string; valueClass: string }) {
  return (
    <div className="flex h-[126px] w-[284px] flex-col items-center rounded-[4px] bg-[#333] text-[#eee]">
      <span className={valueClass}>{value}</span>
      <div className="mt-auto mb-[15px] flex w-full items-center pr-[15px] pl-[21px] text-[19px] leading-[28px] tracking-[0.150px]">
        {unit}
        <span className="mt-[5px] ml-auto"><Chevron w={12} color="#eee" sw={2.400} /></span>
      </div>
    </div>
  );
}

function Answer() {
  return (
    <div className="flex h-[238px] items-start border-b border-[#2a2a2a] pt-[23px] pl-[209px]">
      <div className="flex w-[630px] flex-col gap-[19px]">
        <div className="flex h-[45px] items-center rounded-[4px] bg-[#333] pr-[15px] pb-[2px] pl-[21px] text-[19px] tracking-[0.080px] text-[#e0e0e0]">
          Temperature
          <span className="mt-[5px] ml-auto"><Chevron w={12} color="#eee" sw={2.400} /></span>
        </div>
        <div className="flex">
          <UnitBox value="451" unit="Fahrenheit" valueClass="mt-[14px] text-[32px] leading-[40px] font-bold tracking-[-1.900px]" />
          <div className="mt-[29px] flex w-[62px] flex-col items-center gap-[6px]">
            <i className="h-[2px] w-[18px] bg-[#d5d5d5]" />
            <i className="h-[2px] w-[18px] bg-[#d5d5d5]" />
          </div>
          <UnitBox value="505.9278" unit="Kelvin" valueClass="mt-[14px] text-[32px] leading-[40px] font-bold tracking-[0.500px]" />
        </div>
      </div>
      <span className="mt-[-2px] mr-[22px] ml-auto flex size-[22px] items-center justify-center rounded-full bg-[#aaa] font-['DejaVu_Sans'] text-[14px] leading-none font-bold text-[#171717]">
        i
      </span>
    </div>
  );
}

function Result({ title, titleClass, icon, url, urlClass, children }: {
  title: string; titleClass: string; icon: ReactNode; url: string; urlClass: string; children: ReactNode;
}) {
  return (
    <div className="mb-[44px] text-[#c8c8c8]">
      <div className="h-[36px] leading-[30px]">
        <span className={`text-[#f2f2f2] underline decoration-1 underline-offset-[4px] ${titleClass}`}>{title}</span>
      </div>
      <div className="flex h-[29px] items-start leading-[22px]">
        {icon}
        <span className={`ml-[9.500px] text-[18.500px] text-[#e6e6e6] ${urlClass}`}>{url}</span>
      </div>
      <div className="text-[18.500px] leading-[28px]">{children}</div>
    </div>
  );
}

function B({ children }: { children: ReactNode }) {
  return <b className="font-bold">{children}</b>;
}

/* Zero-width non-joiners keep the slash from folding the digits into a fraction glyph. */
const FIVE_NINTHS = "5\u200c⁄\u200c9";

function Results() {
  return (
    <div className="h-[650px] overflow-hidden bg-[#1c1c1c] pt-[25px] pl-[224px] whitespace-nowrap">
      <div className="mb-[42px] flex h-[22px] items-center text-[19px] leading-[22px] text-[#b8b8b8]">
        <span className="mr-[11px] flex h-[22px] w-[42px] items-center rounded-full bg-[#333] pl-[2px]">
          <i className="size-[16px] rounded-full bg-[#ccc]" />
        </span>
        <span className="w-[112.500px] tracking-[0.150px]">US (English)</span>
        <Caret w={9} color="#c8c8c8" />
        <span className="ml-[38px] w-[145.500px] font-semibold tracking-[0.350px] text-[#f2f2f2]">Safe search: off</span>
        <Caret w={9} color="#f2f2f2" />
        <span className="ml-[38.500px] w-[87px] tracking-[-0.200px]">Any time</span>
        <Caret w={9} color="#c8c8c8" />
      </div>
      <Result
        title="451 fahrenheit to celsius. Convert 451 fahrenheit to celsius"
        titleClass="text-[24.500px] tracking-[0.020px]"
        icon={
          <svg className="size-[21px] shrink-0" viewBox="0 0 21 21">
            <circle cx="10.500" cy="10.500" r="10.500" fill="#777" />
            <path d="M8.700 6.300l4 4.200-4 4.200" fill="none" stroke="#1c1c1c" strokeWidth="2.200" />
          </svg>
        }
        url="https://convertsumo.com/451-fahrenheit-to-celsius/"
        urlClass="tracking-[-0.040px]"
      >
        <p className="tracking-[0.090px]">The final formula to convert <B>451 Fahrenheit to Celsius</B> is: [°F] = (<B>451</B> -32) ×{FIVE_NINTHS} = 232.78 The</p>
        <p className="tracking-[0.340px]"><B>Fahrenheit</B> scale, although very popular in the US has an intriguing history and varied</p>
        <p className="tracking-[0.310px]">worldwide adoption scenarios.</p>
      </Result>
      <Result
        title="Convert 451 Fahrenheit to Celsius - CalculateMe.com"
        titleClass="text-[24.500px] tracking-[0.150px]"
        icon={
          <span className="flex size-[21px] shrink-0 items-center justify-center bg-white text-[20px] leading-none font-medium text-[#f7541b]">C</span>
        }
        url="https://www.calculateme.com/temperature/fahrenheit-to-celsius/451"
        urlClass="tracking-[-0.030px]"
      >
        <p className="tracking-[-0.130px]"><B>°Fahrenheit</B> <B>°Celsius</B>; <B>451</B>.00: 232.778: <B>451</B>.01: 232.783: <B>451</B>.02: 232.789: <B>451</B>.03: 232.794:</p>
        <p className="tracking-[-0.220px]"><B>451</B>.04: 232.800: <B>451</B>.05: 232.806: <B>451</B>.06: 232.811: <B>451</B>.07: 232.817: <B>451</B>.08 ...</p>
      </Result>
      <Result
        title="451 Fahrenheit (°F) to Celsius (°C)"
        titleClass="text-[24.500px] tracking-[-0.080px]"
        icon={
          <span className="flex size-[21px] shrink-0 items-center justify-center rounded-[5px] bg-linear-to-b from-[#10bfe6] to-[#087c9b] text-[13px] leading-none font-black tracking-[-0.500px] text-white">
            °F
          </span>
        }
        url="www.celsiusfahrenheit.co/f-to-c/451"
        urlClass="tracking-[-0.190px]"
      >
        <p className="tracking-[0.220px]"><B>To</B> change <B>451° Fahrenheit to Celsius</B>, just need to replace the value [°C] in the formula</p>
        <p className="tracking-[0.060px]">below and then do the math. Step-by-step Solution: Write down the formula: [°C] = ([°F] –</p>
        <p>32) × {FIVE_NINTHS}</p>
      </Result>
      <Result title="451 Fahrenheit to Celsius | fahrenheittocelsius" titleClass="text-[24.500px]" icon={null} url="" urlClass="">
        {null}
      </Result>
    </div>
  );
}

export default function App() {
  return (
    <div className="flex h-[1200px] w-[1920px] flex-col overflow-hidden bg-[#171717] font-['Noto_Sans',sans-serif]">
      <TopBar />
      <div className="flex grow">
        <Dock />
        <div className="flex w-[1860px] flex-col">
          <TitleBar />
          <TabStrip />
          <div className="h-[55px] bg-[#050c3a]">
            <NavBar />
            <BookmarkBar />
          </div>
          <div className="h-px bg-[repeating-linear-gradient(90deg,#14228c_0_2px,#000_2px_6px)]" />
          <div className="relative flex h-[1024px] font-[Lato,sans-serif]">
            <div className="w-[1848px] bg-[#171717]">
              <Header />
              <Answer />
              <Results />
            </div>
            <div className="flex w-[12px] justify-center bg-[#cdcdcd] pt-px">
              <i className="h-[302px] w-[6px] rounded-full bg-[#7f8281]" />
            </div>
            <div className="absolute right-[22px] bottom-[10px] flex h-[37px] w-[168px] items-center justify-center rounded-[5px] bg-[#282828] pb-px text-[18.500px] font-semibold tracking-[0.800px] text-[#6a6a6a] shadow-md">
              Share Feedback
            </div>
          </div>
        </div>
      </div>
    </div>
  );
}
